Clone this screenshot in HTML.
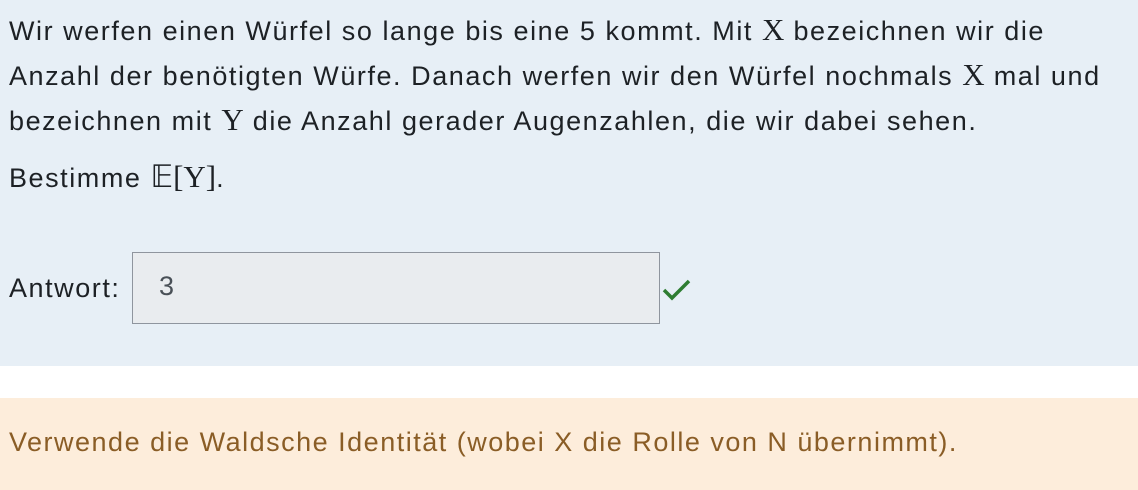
<!DOCTYPE html>
<html><head><style>
body{margin:0;width:1138px;height:490px;overflow:hidden;background:#fff;font-family:"Liberation Sans",sans-serif;}
.q{position:absolute;left:0;top:0;width:1138px;height:366px;background:#e7eff6;color:#1d2125;font-size:27px;letter-spacing:1.55px;}
.q p{margin:0;position:absolute;left:9px;white-space:nowrap;}
.m{font-family:"Liberation Serif",serif;font-size:31px;letter-spacing:0;}
.box{position:absolute;left:132px;top:252px;width:526px;height:70px;border:1.5px solid #8f959e;background:#e9ecef;}
.f{position:absolute;left:0;top:398px;width:1138px;height:92px;background:#fdeddb;color:#8a5d26;font-size:27px;letter-spacing:1.5px;}
</style></head><body>
<div class="q">
<p style="top:8px;line-height:44px;width:1130px">Wir werfen einen Würfel so lange bis eine 5 kommt. Mit <span class="m">X</span> bezeichnen wir die<br>Anzahl der benötigten Würfe. Danach werfen wir den Würfel nochmals <span class="m">X</span> mal und<br>bezeichnen mit <span class="m">Y</span> die Anzahl gerader Augenzahlen, die wir dabei sehen.</p>
<p style="top:159px;line-height:36px">Bestimme <span class="m">𝔼[Y]</span>.</p>
<p style="top:270px;line-height:36px">Antwort:</p>
<div class="box"><span style="position:absolute;left:26px;top:18px;color:#495057">3</span></div>
<svg style="position:absolute;left:662px;top:278px" width="30" height="24" viewBox="0 0 30 24"><path d="M2 12 L10 20 L27 3" fill="none" stroke="#2e7d32" stroke-width="3.5"/></svg>
</div>
<div class="f"><p style="margin:0;position:absolute;left:9px;top:29px;white-space:nowrap">Verwende die Waldsche Identität (wobei X die Rolle von N übernimmt).</p></div>
</body></html>
